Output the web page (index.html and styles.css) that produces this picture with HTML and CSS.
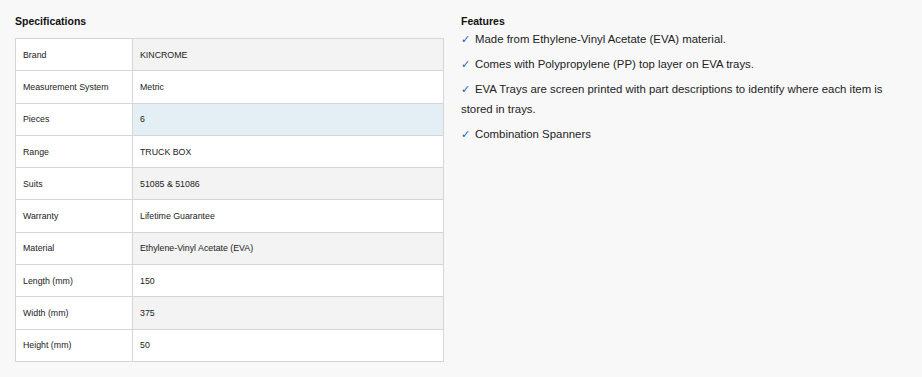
FILE: index.html
```html
<!DOCTYPE html>
<html lang="en">
<head>
  <meta charset="UTF-8">
  <title>Specifications</title>
  <link rel="stylesheet" href="styles.css">
</head>
<body>
  <div class="product-info">
    <!-- Tabela de especificações -->
    <div class="specs">
      <h3>Specifications</h3>
      <table class="spec-table">
        <tr><td class="label">Brand</td><td class="value">KINCROME</td></tr>
        <tr><td class="label">Measurement System</td><td class="value">Metric</td></tr>
        <tr class="hover"><td class="label">Pieces</td><td class="value">6</td></tr>
        <tr><td class="label">Range</td><td class="value">TRUCK BOX</td></tr>
        <tr><td class="label">Suits</td><td class="value">51085 &amp; 51086</td></tr>
        <tr><td class="label">Warranty</td><td class="value">Lifetime Guarantee</td></tr>
        <tr><td class="label">Material</td><td class="value">Ethylene-Vinyl Acetate (EVA)</td></tr>
        <tr><td class="label">Length (mm)</td><td class="value">150</td></tr>
        <tr><td class="label">Width (mm)</td><td class="value">375</td></tr>
        <tr><td class="label">Height (mm)</td><td class="value">50</td></tr>
      </table>
    </div>

    <!-- Lista de características -->
    <div class="features">
      <h3>Features</h3>
      <ul>
        <li>Made from Ethylene-Vinyl Acetate (EVA) material.</li>
        <li>Comes with Polypropylene (PP) top layer on EVA trays.</li>
        <li>EVA Trays are screen printed with part descriptions to identify where each item is stored in trays.</li>
        <li>Combination Spanners</li>
      </ul>
    </div>
  </div>
</body>
</html>
```

FILE: styles.css
```css
/* Reset básico */
* { box-sizing: border-box; margin: 0; padding: 0; }

body {
  font-family: 'Liberation Sans', Arial, sans-serif;
  background: #f8f8f8;
  color: #222;
}

.product-info {
  display: flex;
  gap: 17px;
  padding: 15px 16px 0 15px;
}

h3 {
  font-size: 10.5px;
  font-weight: 700;
  color: #111;
}

/* Coluna da esquerda */
.specs {
  width: 429px;
  flex-shrink: 0;
}

.specs h3 {
  margin-bottom: 11px;
}

.spec-table {
  width: 100%;
  border-collapse: collapse;
  background: #fff;
  border: 1px solid #d6d6d6;
  font-size: 8.8px;
  color: #222;
}

.spec-table td {
  height: 32.3px;
  padding: 0 7px;
  border-bottom: 1px solid #d6d6d6;
  vertical-align: middle;
}

.spec-table .label {
  width: 117px;
  border-right: 1px solid #d6d6d6;
  background: #fff;
}

.spec-table tr:nth-child(odd) .value {
  background: #f3f3f3;
}

.spec-table tr.hover .value {
  background: #e3eef5;
}

/* Coluna da direita */
.features {
  width: 430px;
}

.features h3 {
  margin-bottom: 2px;
}

.features ul {
  list-style: none;
  font-size: 11.4px;
  line-height: 20px;
}

.features li {
  margin-bottom: 5px;
}

.features li::before {
  content: "\2713";
  color: #1f5fb8;
  margin-right: 5px;
}
```
